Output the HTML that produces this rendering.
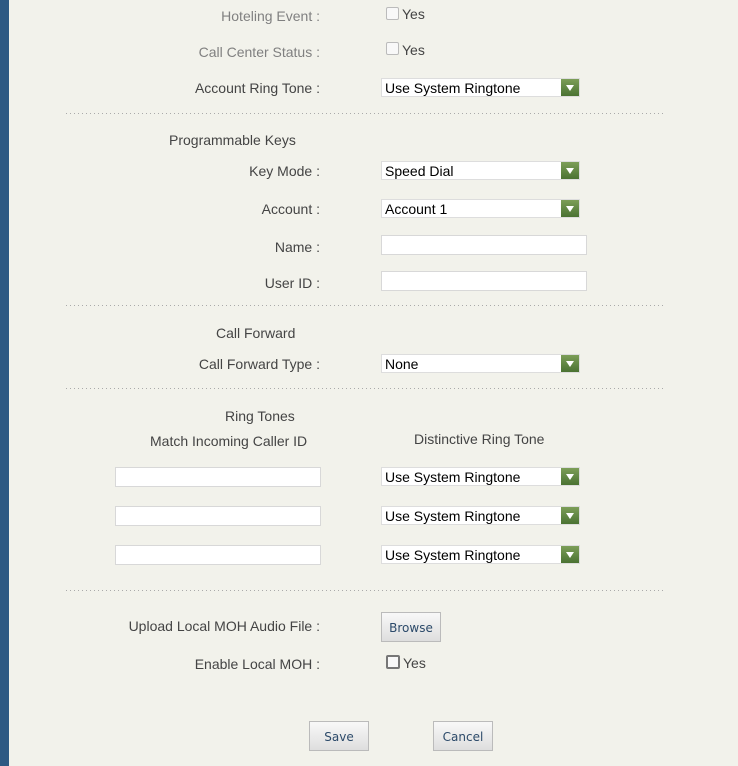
<!DOCTYPE html><html><head><style>
body{margin:0;width:738px;height:766px;background:#f2f2eb;font-family:"Liberation Sans",Arial,sans-serif;font-size:14px;color:#444;position:relative;overflow:hidden}
.bar{position:absolute;left:0;top:0;width:9px;height:766px;background:#2d5983}
.l{position:absolute;right:418px;white-space:nowrap}
.g{color:#808080}
.t{position:absolute;white-space:nowrap}
.sel{position:absolute;left:381px;width:194px;height:17px;background:#fff;border:1px solid #ddd;color:#000;font-size:14px;line-height:18px;padding-left:3px;box-sizing:content-box}
.sel:after{content:"";position:absolute;right:0;top:0;width:18px;height:17px;background:linear-gradient(#7c9e58,#4a7232)}
.sel i{position:absolute;right:5px;top:6px;width:0;height:0;border-left:4px solid transparent;border-right:4px solid transparent;border-top:6px solid #fff;z-index:1}
.in{position:absolute;height:18px;background:#fff;border:1px solid #d8d8d8}
.hr{position:absolute;left:66px;width:600px;height:1px;background:repeating-linear-gradient(90deg,#aaa 0 1px,transparent 1px 4px)}
.cb{position:absolute;width:11px;height:11px;border:1px solid #bbb;background:#f8f8f8;border-radius:2px}
.btn{position:absolute;height:28px;border:1px solid #bbb;background:linear-gradient(#f8f8f8,#dedede);color:#2c4a6a;text-align:center;line-height:30px;font-family:"DejaVu Sans",sans-serif;font-size:12px}
</style></head><body>
<div class="bar"></div>
<div class="l g" style="top:8px">Hoteling Event :</div>
<div class="cb" style="left:386px;top:7px"></div><div class="t" style="left:402px;top:6px">Yes</div>
<div class="l g" style="top:44px">Call Center Status :</div>
<div class="cb" style="left:386px;top:42px"></div><div class="t" style="left:402px;top:42px">Yes</div>
<div class="l" style="top:80px">Account Ring Tone :</div>
<div class="sel" style="top:78px">Use System Ringtone<i></i></div>
<div class="hr" style="top:113px"></div>
<div class="t" style="left:169px;top:132px">Programmable Keys</div>
<div class="l" style="top:163px">Key Mode :</div>
<div class="sel" style="top:161px">Speed Dial<i></i></div>
<div class="l" style="top:201px">Account :</div>
<div class="sel" style="top:199px">Account 1<i></i></div>
<div class="l" style="top:239px">Name :</div>
<div class="in" style="left:381px;top:235px;width:204px"></div>
<div class="l" style="top:275px">User ID :</div>
<div class="in" style="left:381px;top:271px;width:204px"></div>
<div class="hr" style="top:305px"></div>
<div class="t" style="left:216px;top:325px">Call Forward</div>
<div class="l" style="top:356px">Call Forward Type :</div>
<div class="sel" style="top:354px">None<i></i></div>
<div class="hr" style="top:388px"></div>
<div class="t" style="left:225px;top:408px">Ring Tones</div>
<div class="t" style="left:150px;top:433px">Match Incoming Caller ID</div>
<div class="t" style="left:414px;top:431px">Distinctive Ring Tone</div>
<div class="in" style="left:115px;top:467px;width:204px"></div>
<div class="sel" style="top:467px">Use System Ringtone<i></i></div>
<div class="in" style="left:115px;top:506px;width:204px"></div>
<div class="sel" style="top:506px">Use System Ringtone<i></i></div>
<div class="in" style="left:115px;top:545px;width:204px"></div>
<div class="sel" style="top:545px">Use System Ringtone<i></i></div>
<div class="hr" style="top:590px"></div>
<div class="l" style="top:618px">Upload Local MOH Audio File :</div>
<div class="btn" style="left:381px;top:612px;width:58px">Browse</div>
<div class="l" style="top:656px">Enable Local MOH :</div>
<div class="cb" style="left:386px;top:655px;border:2px solid #777;width:10px;height:10px"></div><div class="t" style="left:403px;top:655px">Yes</div>
<div class="btn" style="left:309px;top:721px;width:58px">Save</div>
<div class="btn" style="left:433px;top:721px;width:58px">Cancel</div>
</body></html>
